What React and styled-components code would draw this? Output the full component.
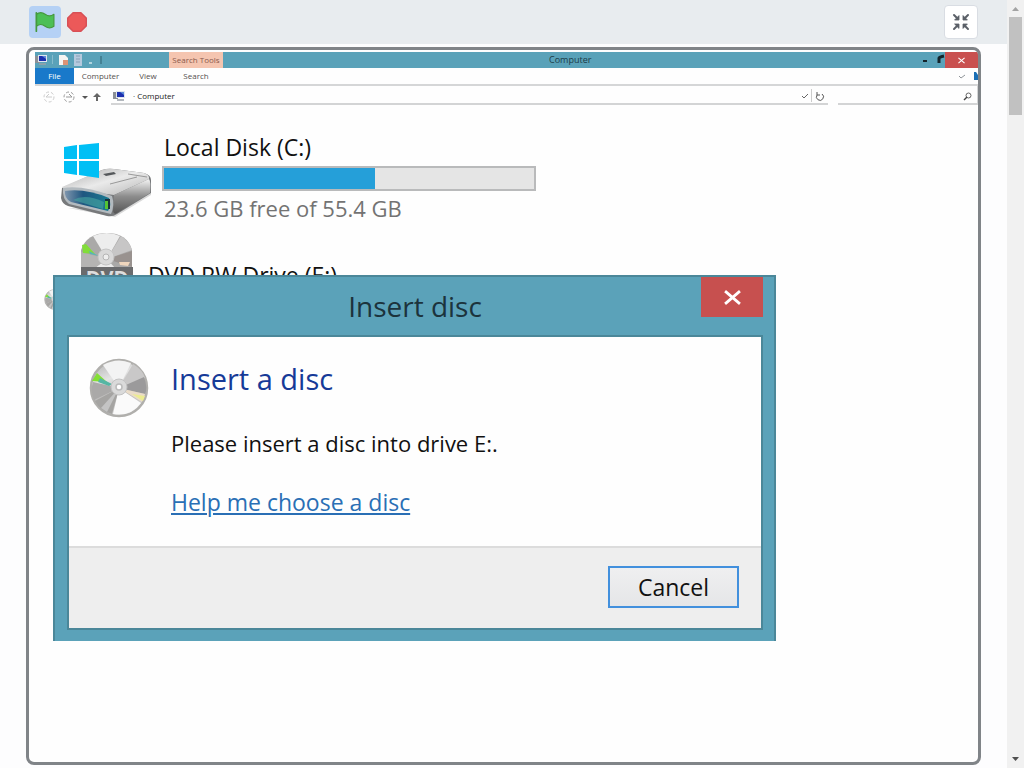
import React from 'react';
import styled, { createGlobalStyle } from 'styled-components';

const GlobalStyle = createGlobalStyle`
  * {
    box-sizing: border-box;
  }
  body {
    margin: 0;
    background: #fdfdfe;
    font-family: "Open Sans", "Noto Sans", sans-serif;
    overflow: hidden;
  }
  button {
    font-family: inherit;
    padding: 0;
  }
`;

const disk = {
  name: 'Local Disk (C:)',
  free: '23.6 GB free of 55.4 GB',
  used: 57,
};

const tabs = [
  { name: 'File', width: 39, active: true },
  { name: 'Computer', width: 53 },
  { name: 'View', width: 42 },
  { name: 'Search', width: 54 },
];

const Page = styled.div`
  display: grid;
  grid-template-columns: 1fr 17px;
  min-height: 100vh;
`;

const Main = styled.main`
  display: flex;
  flex-direction: column;
  min-width: 0;
`;

const Header = styled.header`
  display: flex;
  align-items: center;
  gap: 6px;
  height: 44px;
  padding: 0 29px;
  background: #e8ecef;
`;

const ControlButton = styled.button`
  display: flex;
  align-items: center;
  justify-content: center;
  width: ${(props) => (props.$active ? '32px' : '20px')};
  height: ${(props) => (props.$active ? '32px' : '20px')};
  border: 0;
  border-radius: 4px;
  background: ${(props) => (props.$active ? '#b5d1f5' : 'transparent')};
`;

const FullscreenButton = styled.button`
  display: flex;
  align-items: center;
  justify-content: center;
  width: 34px;
  height: 34px;
  margin-left: auto;
  border: 1px solid #d9dde3;
  border-radius: 4px;
  background: #fff;
`;

const Stage = styled.section`
  position: relative;
  flex: 1;
  margin: 3px 26px;
  padding: 2px 0 0 6px;
  border: 3px solid #808488;
  border-radius: 8px;
  background: #fefefe;
  overflow: hidden;
`;

const TitleBar = styled.div`
  display: grid;
  grid-template-columns: 134px 54px 1fr auto;
  height: 16px;
  background: #5aa2b9;
  font-size: 9px;
  line-height: 16px;
  color: #1d3c48;
`;

const QuickAccess = styled.div`
  display: flex;
  align-items: center;
  gap: 4px;
`;

const ToolTab = styled.div`
  background: #f5c5b0;
  color: #8a5a4c;
  font-size: 8px;
  text-align: center;
  white-space: nowrap;
`;

const WindowTitle = styled.div`
  padding-left: 326px;
`;

const WindowButtons = styled.div`
  display: flex;
  align-items: center;
`;

const CloseSmall = styled.button`
  display: flex;
  align-items: center;
  justify-content: center;
  width: 33px;
  height: 16px;
  border: 0;
  background: #c9504f;
`;

const Ribbon = styled.nav`
  display: flex;
  align-items: center;
  height: 18px;
  border-bottom: 2px solid #d5d6d7;
`;

const RibbonTab = styled.button`
  width: ${(props) => props.$width}px;
  height: 16px;
  border: 0;
  background: ${(props) => (props.$active ? '#1979ca' : 'transparent')};
  color: ${(props) => (props.$active ? '#fff' : '#54504e')};
  font-size: 8px;
  line-height: 16px;
`;

const RibbonEnd = styled.div`
  display: flex;
  align-items: center;
  gap: 9px;
  margin-left: auto;
`;

const AddressRow = styled.div`
  display: flex;
  height: 19px;
  gap: 10px;
`;

const NavIcons = styled.div`
  display: flex;
  align-items: center;
  width: 66px;
  padding: 3px 0 0 8px;
`;

const AddressBar = styled.div`
  display: flex;
  flex: 1;
  align-items: center;
  gap: 8px;
  padding: 3px 0 0 2px;
  border-bottom: 2px solid #d3d4d5;
  font-size: 8px;
  line-height: 14px;
  color: #222;
`;

const AddressEnd = styled.div`
  display: flex;
  align-items: center;
  margin-left: auto;
`;

const SearchBar = styled.div`
  display: flex;
  align-items: center;
  justify-content: flex-end;
  width: 140px;
  padding: 3px 5px 0 0;
  border-bottom: 2px solid #d3d4d5;
  border-right: 1px solid #d3d4d5;
`;

const DriveList = styled.div`
  padding: 26px 25px;
`;

const Drive = styled.div`
  display: flex;
  gap: 9px;
`;

const DriveImage = styled.div`
  padding-top: 11px;
`;

const DriveInfo = styled.div`
  width: 374px;
`;

const DriveName = styled.div`
  padding-left: 2px;
  font-size: 23px;
  line-height: 32px;
  color: #111;
`;

const UsageBar = styled.div`
  height: 25px;
  margin-top: 3px;
  border: 2px solid #b9babb;
  background: #e5e5e5;
`;

const UsageFill = styled.div`
  height: 100%;
  background: #259fd9;
`;

const DriveSpace = styled.div`
  padding-left: 2px;
  font-size: 22px;
  line-height: 34px;
  color: #737373;
`;

const DvdDrive = styled.div`
  display: flex;
  gap: 13px;
  padding: 7px 0 0 20px;
`;

const DvdName = styled(DriveName)`
  padding-top: 27px;
`;

const HiddenDisc = styled.div`
  position: absolute;
  left: 15px;
  top: 239px;
`;

const Dialog = styled.div`
  position: absolute;
  left: 24px;
  top: 225px;
  width: 723px;
  max-width: calc(100% - 48px);
  padding: 0 11px 11px 12px;
  border: 2px solid #4b8799;
  border-bottom: 0;
  background: #5ba2b9;
`;

const DialogTitleBar = styled.div`
  display: grid;
  grid-template-columns: 1fr auto 1fr;
  height: 58px;
`;

const DialogTitle = styled.h2`
  grid-column: 2;
  margin: 0;
  font-size: 28px;
  font-weight: 400;
  line-height: 58px;
  color: #1c333c;
`;

const CloseButton = styled.button`
  display: flex;
  align-items: center;
  justify-content: center;
  justify-self: end;
  width: 62px;
  height: 40px;
  border: 0;
  background: #c7504f;
`;

const DialogPanel = styled.div`
  border: 2px solid #4b8799;
  background: #fefefe;
`;

const DialogBody = styled.div`
  display: flex;
  gap: 22px;
  min-height: 209px;
  padding: 21px 20px;
`;

const Message = styled.div`
  display: flex;
  flex-direction: column;
  align-items: flex-start;
`;

const Heading = styled.h3`
  margin: 0;
  font-size: 29px;
  font-weight: 400;
  line-height: 42px;
  color: #163a98;
`;

const Text = styled.p`
  margin: 27px 0;
  font-size: 22px;
  line-height: 32px;
  color: #111;
`;

const HelpLink = styled.a`
  font-size: 23px;
  line-height: 32px;
  color: #2a6fb5;
  text-decoration-thickness: 2px;
  text-underline-offset: 2px;
`;

const DialogFooter = styled.div`
  display: flex;
  justify-content: flex-end;
  padding: 18px 22px 20px;
  border-top: 2px solid #dcdcdc;
  background: #eeeeee;
`;

const CancelButton = styled.button`
  width: 131px;
  height: 42px;
  border: 2px solid #4290dd;
  background: linear-gradient(#efeff0, #e5e6e8);
  color: #111;
  font-size: 23px;
`;

const Scrollbar = styled.div`
  display: flex;
  flex-direction: column;
  align-items: center;
  height: 100vh;
  background: #f1f1f1;
`;

const ScrollThumb = styled.div`
  width: 13px;
  height: 98px;
  margin-bottom: auto;
  background: #c1c1c1;
`;

const FlagIcon = () => (
  <svg width="20" height="20" viewBox="0 0 16.63 17.5">
    <path
      d="M.75 2A6.44 6.44 0 0 1 8.44 2a6.44 6.44 0 0 0 7.69 0v10.4a6.44 6.44 0 0 1-7.69 0 6.44 6.44 0 0 0-7.69 0"
      fill="#4cbf56"
      stroke="#45993d"
      strokeLinejoin="round"
    />
    <path d="M.75 16.75V.75" stroke="#45993d" strokeWidth="1.5" strokeLinecap="round" />
  </svg>
);

const StopIcon = () => (
  <svg width="20" height="20" viewBox="0 0 14 14">
    <polygon
      points="4.3 .5 9.7 .5 13.5 4.3 13.5 9.7 9.7 13.5 4.3 13.5 .5 9.7 .5 4.3"
      fill="#ec5959"
      stroke="#d85056"
    />
  </svg>
);

const ShrinkIcon = () => (
  <svg width="18" height="18" viewBox="0 0 18 18" fill="#5b6068" stroke="#5b6068">
    {[0, 90, 180, 270].map((angle) => (
      <g key={angle} transform={`rotate(${angle} 9 9)`}>
        <path d="M2 2 5 5" strokeWidth="2" strokeLinecap="round" />
        <path d="M7 2.6V7H2.6z" strokeWidth=".8" strokeLinejoin="round" />
      </g>
    ))}
  </svg>
);

const CloseIcon = ({ size }) => (
  <svg width={size} height={size} viewBox="0 0 16 16">
    <path d="M1 2l14 12M15 2L1 14" stroke="#fff" strokeWidth="2.6" />
  </svg>
);

const ComputerIcon = () => (
  <svg width="12" height="10" viewBox="0 0 12 10">
    <rect y="1" width="5" height="7" fill="#8b9096" />
    <rect x="3" width="9" height="7" fill="#dfe5ee" />
    <rect x="4" y="1" width="7" height="5" fill="#1c2fae" />
    <path d="M7 1h4v3z" fill="#5a8ad8" />
    <path d="M4 9h7" stroke="#9aa0a8" strokeWidth="1.5" />
  </svg>
);

const QuickIcons = () => (
  <svg width="52" height="14" viewBox="0 0 52 14">
    <path d="M1.5 2v9" stroke="#86bccd" />
    <path d="M8 2h6l3 3v7H8z" fill="#f5f4f2" />
    <path d="M12 7h5v5h-5z" fill="#dd9375" />
    <path d="M23 1h8v12h-8z" fill="#b4c9dd" />
    <path d="M25 3h4M25 6h4M25 9h4" stroke="#87a1b8" />
    <path d="M38 10h3" stroke="#cfe6ed" strokeWidth="1.5" />
    <path d="M50 3v8" stroke="#2e6070" />
  </svg>
);

const NavArrows = () => (
  <svg width="58" height="14" viewBox="0 0 58 14" fill="none">
    <circle cx="6" cy="7" r="5" stroke="#ccc" strokeDasharray="3 2" />
    <path d="M9 7H3l3-3" stroke="#ccc" />
    <circle cx="26" cy="7" r="5" stroke="#999" strokeDasharray="3 2" />
    <path d="M23 7h6l-3-3" stroke="#999" />
    <path d="M39 6h6l-3 3z" fill="#555" />
    <path d="M50 7l4-4 4 4h-3v4h-2V7z" fill="#666" />
  </svg>
);

const DiscIcon = ({ size, id }) => (
  <svg width={size} height={size} viewBox="0 0 60 60">
    <defs>
      <linearGradient id={id} x1="0.3" y1="0" x2="0.7" y2="1">
        <stop offset="0" stopColor="#b9b9b9" />
        <stop offset=".3" stopColor="#e4e4e4" />
        <stop offset=".6" stopColor="#b4b3b2" />
        <stop offset="1" stopColor="#dcdcdc" />
      </linearGradient>
    </defs>
    <circle cx="30" cy="30" r="28" fill={`url(#${id})`} stroke="#b0afac" strokeWidth="2.5" />
    <path d="M30 30 14 7Q28-1 42 5z" fill="#f3f3f3" />
    <path d="M30 30 44 6Q54 12 56 20z" fill="#c9c8c8" />
    <path d="M30 30 55 19Q59 30 56 36z" fill="#9b9a9b" />
    <path d="M30 30 56 36 53 44z" fill="#eadcc8" />
    <path d="M43 36 56 38 54 43z" fill="#ecec91" />
    <path d="M30 30 52 45Q42 59 24 56z" fill="#fafafa" />
    <path d="M30 30 23 56Q11 53 6 43z" fill="#a5a4a2" />
    <path d="M30 30 18 54 12 50z" fill="#c4c4c4" />
    <path d="M30 30 5 42Q1 32 4 24z" fill="#aaa9a8" />
    <path d="M18 24 3 23 8 15z" fill="#84df35" />
    <path d="M11 20 23 26 20 28 9 24z" fill="#55b6a4" />
    <circle cx="30" cy="29" r="8" fill="#dadada" stroke="#c2c2c2" />
    <circle cx="30" cy="29" r="3" fill="#fff" stroke="#bbb" strokeWidth="1.5" />
  </svg>
);

const HardDriveIcon = () => (
  <svg width="93" height="78" viewBox="0 0 93 78">
    <defs>
      <linearGradient id="driveTop" x1="0" y1="0" x2="1" y2="1">
        <stop offset="0" stopColor="#a9a9a9" />
        <stop offset=".5" stopColor="#eaeaea" />
        <stop offset="1" stopColor="#b5b5b5" />
      </linearGradient>
      <linearGradient id="driveSide" x1="0" y1="0" x2="0" y2="1">
        <stop offset="0" stopColor="#f5f5f5" />
        <stop offset=".5" stopColor="#8d8d8d" />
        <stop offset="1" stopColor="#555" />
      </linearGradient>
      <linearGradient id="driveFront" x1="0" y1="0" x2="1" y2="0">
        <stop offset="0" stopColor="#7e95ad" />
        <stop offset=".4" stopColor="#1f5680" />
        <stop offset="1" stopColor="#1a7b91" />
      </linearGradient>
    </defs>
    <path d="M8 66 55 75 91 53V49L50 68z" fill="#d9d9d9" />
    <path d="M2 46 42 28Q48 26 54 27L84 31Q91 33 91 38V51L57 72Q53 75 47 74L8 64Q2 62 1 56z" fill="#77797b" />
    <path d="M2 45 42 28Q48 26 54 27L84 31Q90 33 89 37L54 53 3 46z" fill="url(#driveTop)" />
    <path d="M54 53 89 37Q91 39 90 51L57 71Q54 73 53 69z" fill="url(#driveSide)" />
    <path d="M3 46Q24 43 52 54Q55 63 51 72L9 62Q2 57 3 46z" fill="#b3babf" />
    <path d="M5 49Q25 46 49 56Q52 63 48 69L11 60Q4 56 5 49z" fill="url(#driveFront)" />
    <path d="M13 58Q25 51 44 60L43 67z" fill="#47a7a2" opacity=".6" />
    <path d="M45 57h5v10h-5z" fill="#18333d" />
    <path d="M45 59h3v8h-3z" fill="#54c334" />
    <path d="M43 32 54 30 56 32 46 34z" fill="#55585b" />
    <path d="M50 42 77 35M68 32 87 35" stroke="#999" />
    <path d="M4 5 17 3V17H4zM19 3 39 1V17H19zM4 19H17V33L4 31zM19 19H39V36L19 33z" fill="#00bff5" />
  </svg>
);

const DvdDriveIcon = () => (
  <svg width="53" height="60" viewBox="0 0 53 60">
    <path d="M1 36V18Q7 1 27 1 47 1 52 18V36z" fill="#aaa9a8" />
    <path d="M27 27 13 4Q27-2 40 4z" fill="#ededed" />
    <path d="M27 27 41 4Q50 10 52 18z" fill="#c7c6c6" />
    <path d="M27 27 52 19V35z" fill="#99928f" />
    <path d="M27 27 1 20V36H14z" fill="#b5b4b3" />
    <path d="M27 27 35 36H15z" fill="#ececec" />
    <path d="M39 30 50 30 48 34 40 33z" fill="#efd6bd" />
    <path d="M2 13 6 12 15 22 3 21z" fill="#82dd39" />
    <path d="M9 19 19 24 10 22z" fill="#58b5b5" />
    <circle cx="26" cy="25" r="8" fill="#d9d9d9" stroke="#c4c4c4" />
    <circle cx="26" cy="25" r="3" fill="#eee" stroke="#b5b5b5" />
    <path d="M1 35h52v25H1z" fill="#6a6b6d" />
    <text x="27" y="53" textAnchor="middle" fontSize="20" fontWeight="700" fill="#ddd">
      DVD
    </text>
  </svg>
);

const DialogWindow = () => (
  <Dialog role="dialog" aria-labelledby="dialog-title">
    <DialogTitleBar>
      <DialogTitle id="dialog-title">Insert disc</DialogTitle>
      <CloseButton aria-label="Close">
        <CloseIcon size={17} />
      </CloseButton>
    </DialogTitleBar>
    <DialogPanel>
      <DialogBody>
        <DiscIcon size={60} id="discMain" />
        <Message>
          <Heading>Insert a disc</Heading>
          <Text>Please insert a disc into drive E:.</Text>
          <HelpLink href="#help">Help me choose a disc</HelpLink>
        </Message>
      </DialogBody>
      <DialogFooter>
        <CancelButton>Cancel</CancelButton>
      </DialogFooter>
    </DialogPanel>
  </Dialog>
);

const ExplorerChrome = () => (
  <>
    <TitleBar>
      <QuickAccess>
        <ComputerIcon />
        <QuickIcons />
      </QuickAccess>
      <ToolTab>Search Tools</ToolTab>
      <WindowTitle>Computer</WindowTitle>
      <WindowButtons>
        <svg width="23" height="12" viewBox="0 0 23 12">
          <path d="M1 7h4" stroke="#14242b" strokeWidth="2" />
          <path d="M17 9V4q0-1 5-2" stroke="#14242b" strokeWidth="3" fill="none" />
        </svg>
        <CloseSmall aria-label="Close window">
          <CloseIcon size={7} />
        </CloseSmall>
      </WindowButtons>
    </TitleBar>
    <Ribbon>
      {tabs.map((tab) => (
        <RibbonTab key={tab.name} $width={tab.width} $active={tab.active}>
          {tab.name}
        </RibbonTab>
      ))}
      <RibbonEnd>
        <svg width="6" height="5" viewBox="0 0 6 5">
          <path d="M0 2l2 2 4-3" stroke="#8f9499" fill="none" />
        </svg>
        <svg width="4" height="8" viewBox="0 0 4 8">
          <path d="M0 0h2l2 3v5H0z" fill="#1b6fb5" />
        </svg>
      </RibbonEnd>
    </Ribbon>
    <AddressRow>
      <NavIcons>
        <NavArrows />
      </NavIcons>
      <AddressBar>
        <ComputerIcon />
        <span>· Computer</span>
        <AddressEnd>
          <svg width="30" height="14" viewBox="0 0 30 14" fill="none">
            <path d="M4 7l2 2 4-4" stroke="#666" />
            <path d="M13.5 0v13" stroke="#ccc" />
            <path d="M19 6a3.5 3.5 0 1 0 5-1M19 3v3h3" stroke="#555" />
          </svg>
        </AddressEnd>
      </AddressBar>
      <SearchBar>
        <svg width="9" height="9" viewBox="0 0 9 9" fill="none">
          <circle cx="5.5" cy="3.5" r="2.5" stroke="#666" />
          <path d="M4 5 1 8" stroke="#444" strokeWidth="1.5" />
        </svg>
      </SearchBar>
    </AddressRow>
  </>
);

const App = () => {
  return (
    <Page>
      <GlobalStyle />
      <Main>
        <Header>
          <ControlButton $active aria-label="Go">
            <FlagIcon />
          </ControlButton>
          <ControlButton aria-label="Stop">
            <StopIcon />
          </ControlButton>
          <FullscreenButton aria-label="Exit full screen">
            <ShrinkIcon />
          </FullscreenButton>
        </Header>
        <Stage>
          <ExplorerChrome />
          <DriveList>
            <Drive>
              <DriveImage>
                <HardDriveIcon />
              </DriveImage>
              <DriveInfo>
                <DriveName>{disk.name}</DriveName>
                <UsageBar>
                  <UsageFill style={{ width: `${disk.used}%` }} />
                </UsageBar>
                <DriveSpace>{disk.free}</DriveSpace>
              </DriveInfo>
            </Drive>
            <DvdDrive>
              <DvdDriveIcon />
              <DvdName>DVD RW Drive (E:)</DvdName>
            </DvdDrive>
          </DriveList>
          <HiddenDisc>
            <DiscIcon size={21} id="discSmall" />
          </HiddenDisc>
          <DialogWindow />
        </Stage>
      </Main>
      <Scrollbar>
        <svg width="17" height="17" viewBox="0 0 17 17">
          <path d="M5 11h7L8.5 7z" fill="#a3a3a3" />
        </svg>
        <ScrollThumb />
        <svg width="17" height="17" viewBox="0 0 17 17">
          <path d="M5 6h7l-3.5 4z" fill="#505050" />
        </svg>
      </Scrollbar>
    </Page>
  );
};

export default App;
